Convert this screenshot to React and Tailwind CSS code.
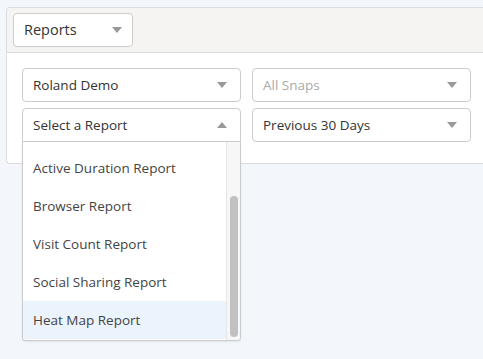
import React from 'react'

function Caret({ up = false }) {
  return (
    <svg width="10" height="6" viewBox="0 0 10 6" className="shrink-0">
      {up ? <path d="M0 6 L5 0 L10 6 Z" fill="#999" /> : <path d="M0 0 L10 0 L5 6 Z" fill="#999" />}
    </svg>
  )
}

function Select({ label, placeholder = false, up = false, open = false }) {
  return (
    <div
      className={`h-[34px] bg-white border border-[#ccc] flex items-center justify-between pl-[10px] pr-[13px] ${
        open ? 'rounded-t-[4px]' : 'rounded-[4px]'
      }`}
    >
      <span className={placeholder ? 'text-[#aaa]' : 'text-[#333]'}>{label}</span>
      <Caret up={up} />
    </div>
  )
}

const reports = [
  'Active Duration Report',
  'Browser Report',
  'Visit Count Report',
  'Social Sharing Report',
  'Heat Map Report',
]

export default function App() {
  return (
    <div className="w-[483px] h-[359px] overflow-hidden bg-[#f3f6fa] pt-[7px] pl-[6px] text-[13.5px] font-['Open_Sans',sans-serif]">
      <div className="border border-r-0 border-[#d9dde2] rounded-l-[4px] bg-white">
        {/* header */}
        <div className="h-[45px] bg-[#f5f4f3] border-b border-[#d9dde2] rounded-tl-[4px] pl-[6px] pt-[5px]">
          <div className="w-[120px] h-[34px] bg-white border border-[#ccc] rounded-[4px] flex items-center justify-between pl-[10px] pr-[10px] text-[14.5px] text-[#333]">
            <span>Reports</span>
            <Caret />
          </div>
        </div>

        {/* filters */}
        <div className="pl-[15px] pr-[12px] pt-[15px] pb-[21px]">
          <div className="grid grid-cols-2 gap-x-[11px] gap-y-[6px]">
            <Select label="Roland Demo" />
            <Select label="All Snaps" placeholder />
            <div className="relative">
              <Select label="Select a Report" up open />
              <div className="absolute left-0 right-0 top-full z-10 h-[199px] bg-white border border-t-0 border-[#ccc] rounded-b-[4px] shadow-[0_1px_2px_rgba(0,0,0,0.08)] flex overflow-hidden">
                <div className="flex-1 pt-[7px]">
                  {reports.map((r, i) => (
                    <div
                      key={r}
                      className={`h-[38px] flex items-center pl-[10px] text-[#444] ${
                        i === reports.length - 1 ? 'bg-[#ebf4fd]' : ''
                      }`}
                    >
                      {r}
                    </div>
                  ))}
                </div>
                <div className="w-[14px] bg-[#f7f7f7] border-l border-[#e6e6e6] pt-[54px] pb-[3px] flex justify-center">
                  <div className="w-[8px] h-full bg-[#c1c1c1] rounded-full" />
                </div>
              </div>
            </div>
            <Select label="Previous 30 Days" />
          </div>
        </div>
      </div>
    </div>
  )
}
